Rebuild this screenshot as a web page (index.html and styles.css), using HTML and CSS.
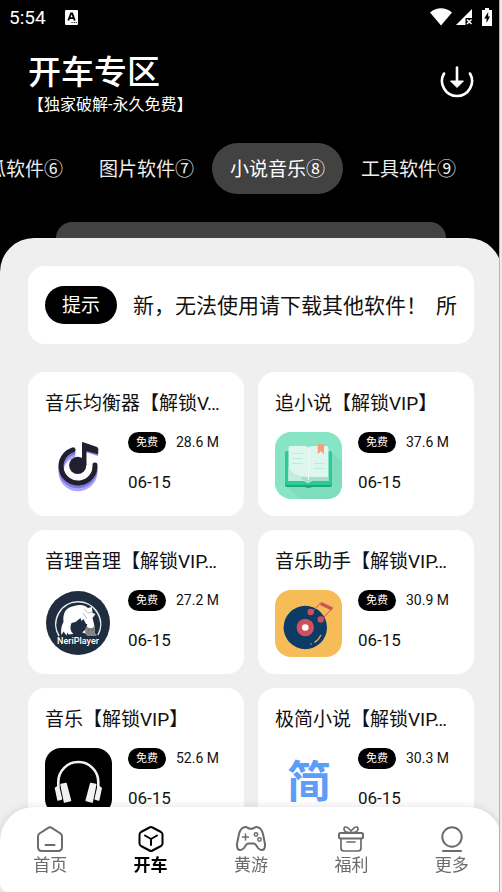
FILE: index.html
```html
<!DOCTYPE html>
<html lang="zh-CN">
  <head>
    <meta charset="UTF-8" />
    <meta name="viewport" content="width=device-width, initial-scale=1.0" />
    <title>开车专区</title>
    <link rel="stylesheet" href="styles.css">
  </head>

  <body>
    <div class="app">
      <div class="statusbar">
        <span class="time">5:54</span>
        <svg width="13" height="15" viewBox="0 0 13 15">
          <rect width="13" height="15" rx="1" fill="#fff" />
          <path d="M3.3 10.5L6 3.5h1.2l2.6 7M4.6 8.2h4" fill="none" stroke="#000" stroke-width="1.8" />
          <path d="M6.5 12.5h1M8.7 12.5h1M10.8 12.5h1" stroke="#000" />
        </svg>
        <div class="signals">
          <svg width="22" height="18" viewBox="0 0 22 18">
            <path d="M0 4.5Q11-3.8 22 4.5L11 17.500z" fill="#fff" />
          </svg>
          <svg width="17" height="16" viewBox="0 0 17 16">
            <path d="M16 0v9H9.500v7H0z" fill="#fff" />
            <path d="M11 10.500l4.500 4.500M15.500 10.500L11 15" stroke="#fff" stroke-width="1.500" />
          </svg>
          <svg class="battery" width="10" height="18" viewBox="0 0 10 18">
            <path d="M3 0h4v2h3v16H0V2h3z" fill="#fff" />
            <path d="M6.200 4L2.200 10.500h2.300V15l3.500-6.500H6.200z" fill="#000" />
          </svg>
        </div>
      </div>

      <header>
        <div>
          <h1>开车专区</h1>
          <p>【独家破解-永久免费】</p>
        </div>
        <button class="download" aria-label="下载">
          <svg width="34" height="34" viewBox="0 0 34 34">
            <path d="M4 9.500A15 15 0 1 0 30 9.500" fill="none" stroke="#fff" stroke-width="2.600" stroke-linecap="round" />
            <path d="M17 3.500v16" stroke="#fff" stroke-width="2.600" stroke-linecap="round" />
            <path d="M10.500 17h13L17 23.500z" fill="#fff" stroke="#fff" stroke-linejoin="round" />
          </svg>
        </button>
      </header>

      <div class="tabs">
        <button>西瓜软件⑥</button>
        <button>图片软件⑦</button>
        <button class="valgt">小说音乐⑧</button>
        <button>工具软件⑨</button>
      </div>

      <div class="behind"></div>
      <main>
        <section class="notice">
          <b>提示</b>
          <div class="ticker"><span>新，无法使用请下载其他软件！</span><span>所</span></div>
        </section>

        <section class="grid">
          <article>
            <h2>音乐均衡器【解锁V…</h2>
            <div class="info">
              <svg class="icon" viewBox="0 0 67 67">
                <g fill="none" stroke-width="5" stroke-linecap="round">
                  <path d="M28 19.500A17 17 0 1 0 50 35" stroke="#aaa5ff" transform="translate(0 4)" />
                  <path d="M28 18.500A17 17 0 1 0 50 34" stroke="#7b78dc" transform="translate(0 2)" />
                  <path d="M28 17.800A17 17 0 1 0 50 33" stroke="#211f2e" />
                </g>
                <path d="M40 20l13 4v-3l-13-4z" fill="#8d89ed" />
                <path d="M37.500 10.500l14.500 5q.8.300.8 1.200v5L41 18.500V33h-3.500z" fill="#211f2e" stroke="#211f2e" stroke-linejoin="round" />
                <circle cx="32.700" cy="33.300" r="8.600" fill="#211f2e" />
              </svg>
              <div class="meta">
                <p><span class="free">免费</span>28.6 M</p>
                <time>06-15</time>
              </div>
            </div>
          </article>

          <article>
            <h2>追小说【解锁VIP】</h2>
            <div class="info">
              <svg class="icon" viewBox="0 0 67 67">
                <rect width="67" height="67" rx="16" fill="#87e5c6" />
                <path d="M57 21l10 9v21q0 16-16 16H25L11 53z" fill="#7fdcbe" />
                <rect x="10" y="20" width="47" height="35" rx="2" fill="#1ea77a" />
                <path d="M29 52h9q0 4-4.500 4T29 52z" fill="#1ea77a" />
                <rect x="10" y="19" width="47" height="34" rx="2" fill="#2bcb95" />
                <path d="M33.500 15.500q-1.500-1.500-4-1.500H15.500q-2 0-2 2v33h16q3 0 4 2.500 1-2.500 4-2.500h16V16q0-2-2-2h-14q-2.500 0-4 1.500z" fill="#ddf6ee" />
                <path d="M13.500 35v14h16q3 0 4 2.500 1-2.500 4-2.500h16v-4H32q-15 0-18.500-10z" fill="#a7dfcd" />
                <path d="M13.500 35q3 7 10 8.500l3 1.500q-2 2 7 6.500-1-2.500-4-2.500h-16z" fill="#c4ecdf" />
                <path d="M33.500 16v32" stroke="#eefbf7" />
                <path d="M17 21.500h11M17 26.500h11M17 31.500h11M39 31.500h11M39 36.500h11" stroke="#bdebdc" />
                <path d="M42.700 12.300H49v10l-3.200-3-3.100 3z" fill="#fc9c7b" />
              </svg>
              <div class="meta">
                <p><span class="free">免费</span>37.6 M</p>
                <time>06-15</time>
              </div>
            </div>
          </article>

          <article>
            <h2>音理音理【解锁VIP…</h2>
            <div class="info">
              <svg class="icon" viewBox="0 0 67 67">
                <circle cx="33" cy="33" r="32" fill="#1f2d3e" />
                <path d="M14 46A22.500 22.500 0 1 1 53 45" fill="none" stroke="#e7eaed" stroke-width="1.500" />
                <path d="M16.500 45Q15 38 18.500 32 17 18 29 16q9-3 14 2l4-1 .5 6 3 1-3 4q2 6 2 11l-8 5-5-2q5-3 5-7l-3-6-2 2-1-3-5 4-4 1q-3 7 2 11l-5 .5-1-2-1 3-3-4z" fill="#fff" />
                <path d="M38 23l4 6M39 19l4 4 4-1" fill="none" stroke="#b6bec7" />
                <path d="M26.500 35q2 7 8 7t7-8" fill="none" stroke="#1f2d3e" stroke-width="1.500" />
                <path d="M41 36l3 2h3l3-2v7l2 2-1 1H42l-2-4z" fill="#858585" />
                <path d="M43 40h1M47 40h1" stroke="#444" />
                <text x="33" y="54" class="neri">NeriPlayer</text>
              </svg>
              <div class="meta">
                <p><span class="free">免费</span>27.2 M</p>
                <time>06-15</time>
              </div>
            </div>
          </article>

          <article>
            <h2>音乐助手【解锁VIP…</h2>
            <div class="info">
              <svg class="icon" viewBox="0 0 67 67">
                <rect width="67" height="67" rx="16" fill="#f6bc58" />
                <circle cx="30.300" cy="37.500" r="21.700" fill="#0c3b66" />
                <circle cx="30.300" cy="37.500" r="8.700" fill="#ce505b" />
                <circle cx="30.300" cy="37.500" r="3.300" fill="#fff" />
                <path d="M39.500 52.500Q44 49.500 46 45" fill="none" stroke="#f6bc58" stroke-width="1.200" />
                <circle cx="36" cy="54" r=".7" fill="#f6bc58" />
                <path d="M37.500 21.500l8.500-9M47 29l10-10.500" fill="none" stroke="#ce505b" />
                <path d="M46.500 12l11.500 5.500-1.500 3-11.500-5.500z" fill="#ce505b" />
                <circle cx="35.700" cy="22" r="3.200" fill="#ce505b" />
                <circle cx="45.700" cy="29.500" r="3.200" fill="#ce505b" />
              </svg>
              <div class="meta">
                <p><span class="free">免费</span>30.9 M</p>
                <time>06-15</time>
              </div>
            </div>
          </article>

          <article>
            <h2>音乐【解锁VIP】</h2>
            <div class="info">
              <svg class="icon" viewBox="0 0 67 67">
                <rect width="67" height="67" rx="16" />
                <path d="M13.300 39v-5a20 20 0 0 1 40 0v5" fill="none" stroke="#f2f2f2" stroke-width="2.600" />
                <g fill="#f2f2f2" stroke="#f2f2f2" stroke-width="1.500" stroke-linejoin="round">
                  <path d="M10.500 40l3-2 3 13-3.500 1zM16 36.500l5-1 4.500 17-6 1.500z" />
                  <path d="M56.200 40l-3-2-3 13 3.500 1zM50.700 36.500l-5-1-4.500 17 6 1.500z" />
                </g>
              </svg>
              <div class="meta">
                <p><span class="free">免费</span>52.6 M</p>
                <time>06-15</time>
              </div>
            </div>
          </article>

          <article>
            <h2>极简小说【解锁VIP…</h2>
            <div class="info">
              <svg class="icon" viewBox="0 0 67 67">
                <text x="34" y="50" class="jian">简</text>
              </svg>
              <div class="meta">
                <p><span class="free">免费</span>30.3 M</p>
                <time>06-15</time>
              </div>
            </div>
          </article>
        </section>
      </main>

      <nav>
        <a href="#">
          <svg viewBox="0 0 30 26">
            <path d="M13.200 1.800L4.500 7.500Q3 8.500 3 10.500V21q0 4 4 4h16q4 0 4-4V10.500q0-2-1.500-3L16.800 1.800q-1.800-1.200-3.600 0zM10.500 19h9" />
          </svg>
          首页
        </a>
        <a href="#" class="valgt">
          <svg viewBox="0 0 30 26">
            <path d="M13.500 1.500L5 6Q3.500 7 3.500 8.500v9Q3.500 19 5 20l8.500 4.500q1.500.8 3 0L25 20q1.500-1 1.500-2.500v-9Q26.500 7 25 6l-8.500-4.500q-1.500-.8-3 0zM9 9.500l6 3.500 6-3.500M15 13v6" />
          </svg>
          开车
        </a>
        <a href="#">
          <svg viewBox="0 0 30 26">
            <path d="M7.500 1.500Q10 .5 12 2q3 1.500 6 0 2-1.500 4.500-.5 3 1 4.500 6.500l2 10q.5 5-2.500 6-2.500.5-4.500-2l-2-3q-1-1.500-2.500-1.500h-5q-1.500 0-2.500 1.500l-2 3q-2 2.500-4.500 2-3-1-2.500-6l2-10q1.500-5.500 4.500-6.500z" />
            <g stroke-width="1.500">
              <path d="M9.500 8v6M6.500 11h6" />
              <circle cx="20" cy="8.500" r="1.700" />
              <circle cx="23.500" cy="13.500" r="1.700" />
            </g>
          </svg>
          黄游
        </a>
        <a href="#">
          <svg viewBox="0 0 30 26">
            <rect x="3" y="7" width="24" height="5.500" rx="1.500" />
            <path d="M5 12.500V22q0 3 3 3h14q3 0 3-3v-9.500M11 16h8M15 6.500Q8 7 8 3q0-3 3.500-1.500L15 5l3.500-3.500Q22 0 22 3q0 4-7 3.500z" stroke-width="1.700" />
          </svg>
          福利
        </a>
        <a href="#">
          <svg viewBox="0 0 30 26">
            <circle cx="15" cy="11" r="9.700" />
            <path d="M6 25h18" />
          </svg>
          更多
        </a>
      </nav>
    </div>
  </body>
</html>
```
FILE: styles.css
```css
* {
  box-sizing: border-box;
  margin: 0;
  padding: 0;
}
body {
  font-family: Roboto, "Noto Sans CJK SC", sans-serif;
  color: #111;
  background-color: #000;
}
button {
  font: inherit;
  color: inherit;
  background: none;
  border: 0;
}
.app {
  position: relative;
  min-height: 100vh;
  display: flex;
  flex-direction: column;
}
/* window edge */
.app::after {
  content: "";
  position: absolute;
  top: 0;
  right: 0;
  bottom: 0;
  width: 2px;
  z-index: 3;
  border-left: 1px solid #b4b4b4;
  background-color: #ececec;
}

.statusbar {
  display: flex;
  align-items: center;
  gap: 19px;
  height: 34px;
  padding: 0 10px 0 9px;
  color: white;
}
.time {
  font-size: 19px;
}
.signals {
  display: flex;
  align-items: center;
  gap: 4px;
  margin-left: auto;
}
.battery {
  margin-left: 5px;
}

header {
  display: flex;
  justify-content: space-between;
  align-items: flex-start;
  padding: 18px 28px 27px;
  color: white;
}
header h1 {
  font-size: 33px;
  line-height: 42px;
  font-weight: 500;
}
header p {
  font-size: 16px;
  line-height: 22px;
}
.download {
  margin-top: 12px;
}
.download svg {
  display: block;
}

.tabs {
  display: flex;
  justify-content: flex-end;
  overflow: hidden;
  padding-right: 28px;
  color: #eee;
}
.tabs button {
  flex: none;
  font-size: 19px;
  line-height: 49px;
  padding: 2px 18px 0;
  border-radius: 26px;
}
.tabs .valgt {
  color: white;
  background-color: #424242;
}

.behind {
  height: 16px;
  margin: 28px 56px 0;
  border-radius: 16px 16px 0 0;
  background-color: #424242;
}
main {
  flex: 1;
  padding: 28px;
  border-radius: 34px 34px 0 0;
  background-color: #efefef;
}
.notice {
  display: flex;
  align-items: center;
  gap: 16px;
  height: 78px;
  padding: 0 17px;
  margin-bottom: 28px;
  border-radius: 17px;
  background-color: white;
}
.notice b {
  flex: none;
  font-size: 19px;
  font-weight: 400;
  line-height: 36px;
  padding: 2px 17px 0;
  border-radius: 19px;
  color: white;
  background-color: black;
}
.ticker {
  display: flex;
  gap: 9px;
  overflow: hidden;
  white-space: nowrap;
  font-size: 21px;
  padding-bottom: 2px;
}

.grid {
  display: grid;
  grid-template-columns: 1fr 1fr;
  gap: 14px;
}
article {
  min-width: 0;
  padding: 17px;
  border-radius: 17px;
  background-color: white;
}
h2 {
  font-size: 19px;
  font-weight: 400;
  line-height: 30px;
  margin-bottom: 13px;
  white-space: nowrap;
}
.info {
  display: flex;
  gap: 16px;
}
.icon {
  flex: none;
  width: 67px;
  height: 67px;
}
.neri {
  font-size: 9px;
  font-weight: 500;
  text-anchor: middle;
  fill: white;
}
.jian {
  font-size: 44px;
  font-weight: 700;
  text-anchor: middle;
  fill: #5b9df8;
}
.meta {
  display: flex;
  flex-direction: column;
  gap: 18px;
}
.meta p {
  display: flex;
  align-items: center;
  gap: 10px;
  font-size: 14px;
  line-height: 21px;
  white-space: nowrap;
}
.free {
  font-size: 11px;
  padding: 0 8px;
  border-radius: 11px;
  color: white;
  background-color: black;
}
.meta time {
  font-size: 17px;
  line-height: 22px;
}

nav {
  position: fixed;
  left: 0;
  right: 0;
  bottom: 0;
  z-index: 2;
  display: flex;
  height: 85px;
  padding-top: 19px;
  border-radius: 34px 34px 8px 8px;
  background-color: white;
  box-shadow: 0 0 10px #0000001f;
}
nav a {
  flex: 1;
  display: flex;
  flex-direction: column;
  align-items: center;
  font-size: 17px;
  line-height: 26px;
  color: #6b6b6b;
  text-decoration: none;
}
nav svg {
  width: 30px;
  height: 26px;
  fill: none;
  stroke: currentColor;
  stroke-width: 2;
  stroke-linecap: round;
  stroke-linejoin: round;
}
nav .valgt {
  color: black;
  font-weight: 700;
}
```
